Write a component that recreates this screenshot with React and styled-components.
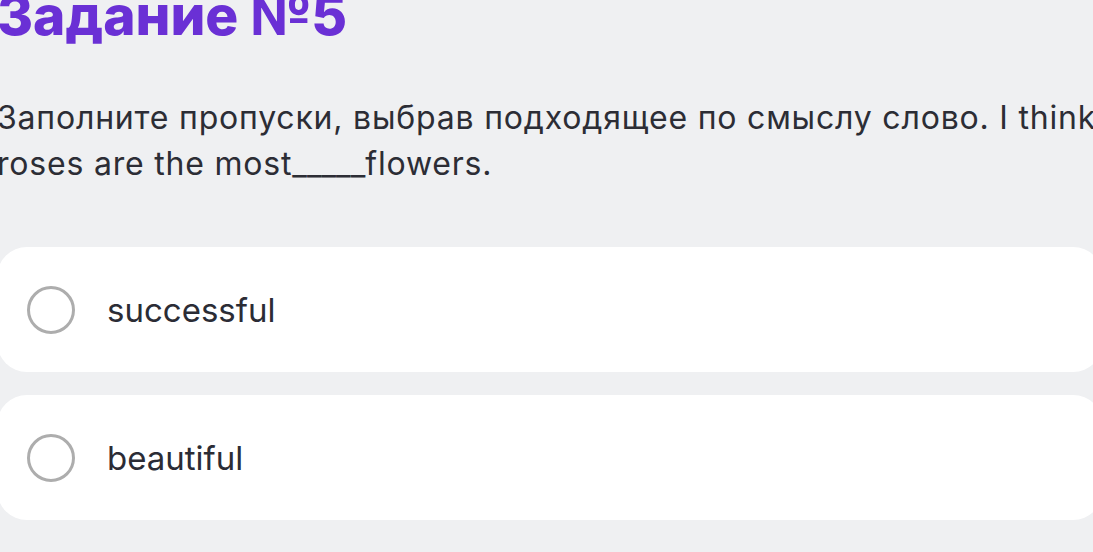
import styled, { createGlobalStyle } from "styled-components";

const GlobalStyle = createGlobalStyle`
  html, body {
    margin: 0;
    padding: 0;
    background: #eff0f2;
    overflow: hidden;
  }
  body {
    font-family: Inter, "Noto Sans", sans-serif;
  }
`;

const Page = styled.div`
  width: 1106px;
  margin-left: -3px;
  margin-top: -12px;
  display: flex;
  flex-direction: column;
`;

const Title = styled.h1`
  margin: 0;
  font-size: 55px;
  line-height: 55px;
  font-weight: 800;
  color: #6a30d5;
  white-space: nowrap;
`;

const Question = styled.p`
  margin: 52px 0 0;
  font-size: 32px;
  line-height: 46px;
  letter-spacing: 0.8px;
  color: #2c2d35;
  white-space: nowrap;
`;

const Blank = styled.span`
  letter-spacing: 0;
`;

const Options = styled.div`
  margin-top: 60px;
  display: flex;
  flex-direction: column;
  gap: 23px;
`;

const Option = styled.label`
  height: 125px;
  box-sizing: border-box;
  padding-left: 30px;
  display: flex;
  align-items: center;
  gap: 32px;
  background: #ffffff;
  border-radius: 30px;
  cursor: pointer;
`;

const Radio = styled.span`
  width: 48px;
  height: 48px;
  box-sizing: border-box;
  border-radius: 50%;
  border: 3px solid #adadad;
  flex-shrink: 0;
`;

const OptionText = styled.span`
  font-size: 33px;
  color: #2b2c35;
`;

const options = ["successful", "beautiful"];

export default function App() {
  return (
    <>
      <GlobalStyle />
      <Page>
        <Title>Задание №5</Title>
        <Question>
          Заполните пропуски, выбрав подходящее по смыслу слово. I think
          <br />
          roses are the most<Blank>_____</Blank>flowers.
        </Question>
        <Options>
          {options.map((o) => (
            <Option key={o}>
              <Radio />
              <OptionText>{o}</OptionText>
            </Option>
          ))}
        </Options>
      </Page>
    </>
  );
}
